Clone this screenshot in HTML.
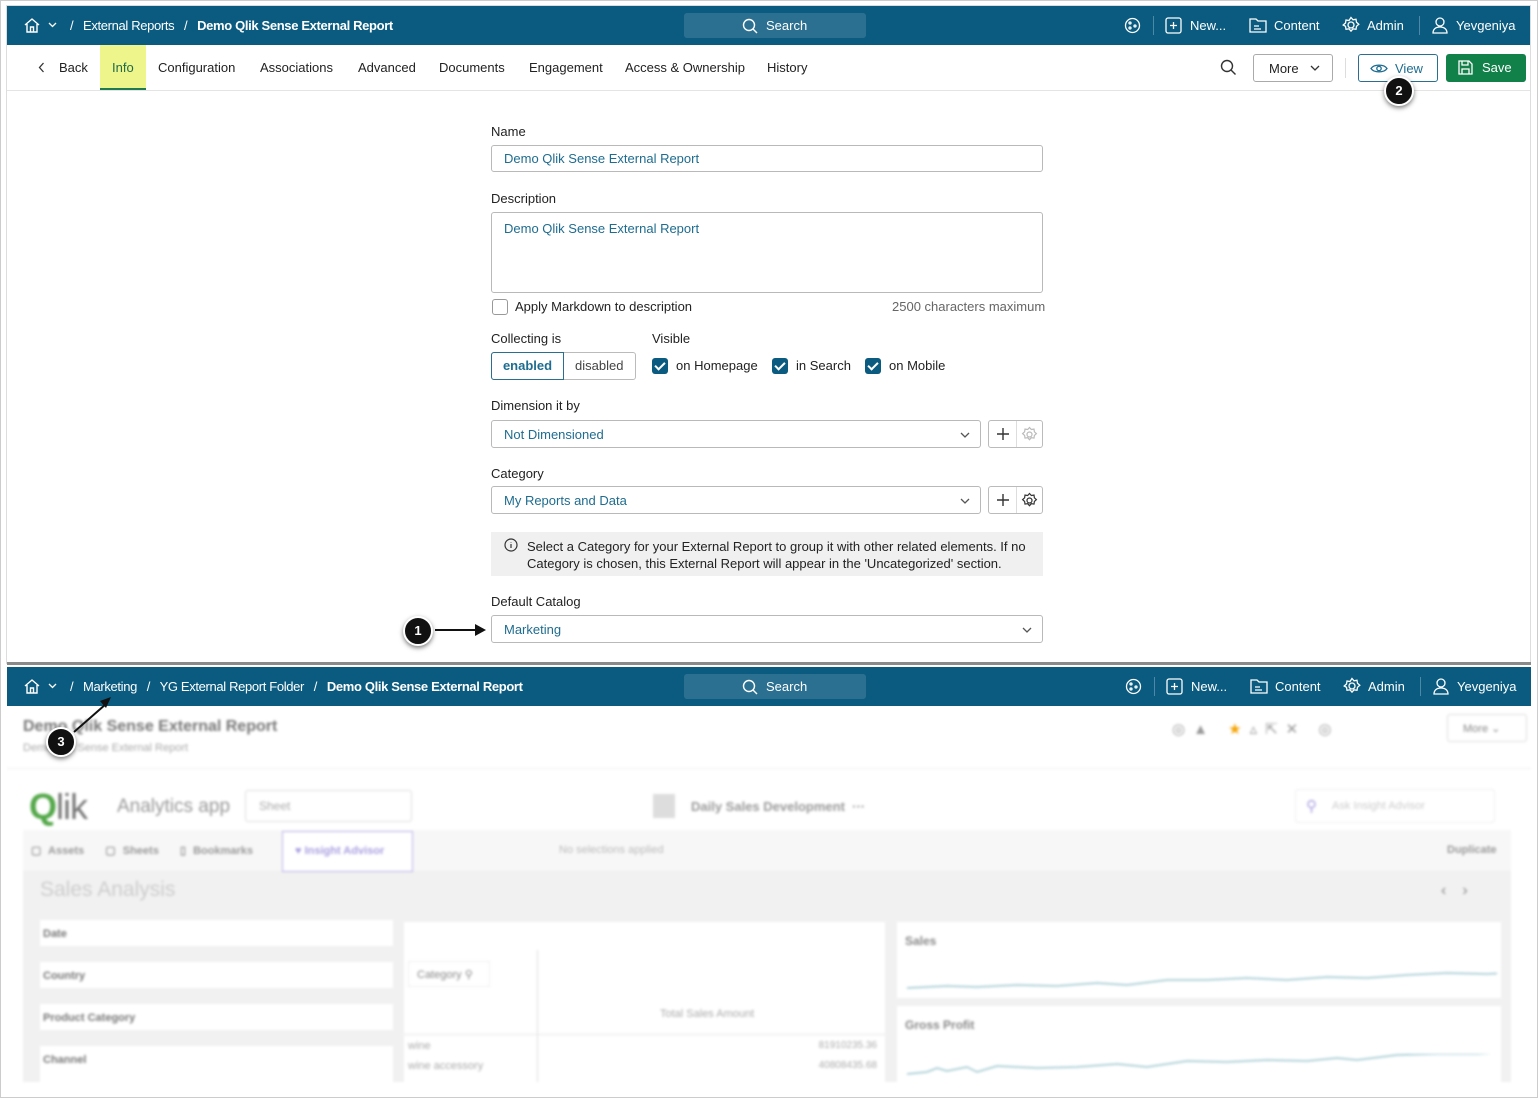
<!DOCTYPE html>
<html><head><meta charset="utf-8">
<style>
*{box-sizing:border-box;margin:0;padding:0}
body{width:1538px;height:1098px;background:#fff;font-family:"Liberation Sans",Arial,sans-serif;position:relative;overflow:hidden;color:#222}
.a{position:absolute}
.bar{position:absolute;left:7px;width:1523px;height:39px;background:#0a5b7f;color:#fff;font-size:13px}
.bar .t{position:absolute;top:12px;white-space:nowrap}
.bc{letter-spacing:-0.35px}
.srch{position:absolute;left:677px;top:7px;width:182px;height:25px;background:#2b7091;border-radius:3px}
.lbl{position:absolute;font-size:13px;color:#222}
.inp{position:absolute;border:1px solid #b9b9b9;border-radius:3px;background:#fff;font-size:13px;color:#1e6c8f;padding-left:12px}
.cb{position:absolute;width:16px;height:16px;border-radius:3px;background:#0a5b7f}
.cb:after{content:"";position:absolute;left:5px;top:2px;width:4px;height:8px;border:solid #fff;border-width:0 2px 2px 0;transform:rotate(45deg)}
.num{position:absolute;width:30px;height:30px;border-radius:50%;background:#111;border:2px solid #fff;box-shadow:0 2px 5px rgba(0,0,0,.5);color:#fff;font-weight:bold;font-size:13px;text-align:center;line-height:26px}
.tab{position:absolute;top:60px;font-size:13px;color:#222}
.blur{filter:blur(1.3px)}
</style></head><body>
<div class="a" style="left:0;top:0;width:1538px;height:1098px;border:1px solid #ccc"></div>
<div class="a" style="left:6px;top:5px;width:1525px;height:659px;border:1px solid #ddd"></div>

<div class="bar" style="top:6px">
 <svg class="a" style="left:16px;top:11px" width="18" height="17" viewBox="0 0 18 17" fill="none" stroke="#fff" stroke-width="1.4"><path d="M2 8L9 2l7 6M4 7v8h10V7M7.5 15v-5h3v5"/></svg>
 <svg class="a" style="left:41px;top:16px" width="9" height="6" viewBox="0 0 9 6" fill="none" stroke="#fff" stroke-width="1.3"><path d="M1 1l3.5 3.5L8 1"/></svg>
 <span class="t bc" style="left:63px">/ &nbsp; External Reports &nbsp; / &nbsp; <b>Demo Qlik Sense External Report</b></span>
 <div class="srch"><svg class="a" style="left:58px;top:5px" width="16" height="16" fill="none" stroke="#fff" stroke-width="1.4"><circle cx="7" cy="7" r="5.5"/><path d="M11 11l4 4"/></svg><span class="t" style="left:82px;top:5px">Search</span></div>
 <svg class="a" style="left:1117px;top:11px" width="17" height="17" fill="none" stroke="#fff" stroke-width="1.3"><circle cx="8.5" cy="8.5" r="7"/><circle cx="6" cy="6" r="1"/><circle cx="11" cy="9" r="1"/><circle cx="6" cy="11" r="1"/></svg>
 <div class="a" style="left:1146px;top:10px;width:1px;height:19px;background:#4d88a6"></div>
 <svg class="a" style="left:1158px;top:11px" width="17" height="17" fill="none" stroke="#fff" stroke-width="1.3"><rect x="1" y="1" width="15" height="15" rx="2"/><path d="M8.5 5v7M5 8.5h7"/></svg>
 <span class="t" style="left:1183px">New...</span>
 <svg class="a" style="left:1242px;top:11px" width="18" height="16" fill="none" stroke="#fff" stroke-width="1.3"><path d="M1 2h6l2 2h8v11H1z M5 9h5M5 12h7"/></svg>
 <span class="t" style="left:1267px">Content</span>
 <svg class="a" style="left:1335px;top:10px" width="18" height="18" fill="none" stroke="#fff" stroke-width="1.3"><circle cx="9" cy="9" r="3"/><path d="M9 1.5l2 2.3 3-.5.5 3 2.3 2-2.3 2-.5 3-3-.5-2 2.3-2-2.3-3 .5-.5-3L1.2 9l2.3-2 .5-3 3 .5z"/></svg>
 <span class="t" style="left:1360px">Admin</span>
 <div class="a" style="left:1412px;top:10px;width:1px;height:19px;background:#4d88a6"></div>
 <svg class="a" style="left:1425px;top:10px" width="16" height="18" fill="none" stroke="#fff" stroke-width="1.3"><circle cx="8" cy="6" r="4"/><path d="M1 17c0-4 3-6 7-6s7 2 7 6z"/></svg>
 <span class="t" style="left:1449px">Yevgeniya</span>
</div>

<div class="a" style="left:100px;top:45px;width:46px;height:45px;background:#eef58a;border-bottom:2px solid #1f7a50"></div>
<div class="a" style="left:7px;top:90px;width:1523px;height:1px;background:#e4e4e4"></div>
<svg class="a" style="left:38px;top:62px" width="7" height="11" fill="none" stroke="#333" stroke-width="1.3"><path d="M5.5 1L1.5 5.5 5.5 10"/></svg>
<span class="tab" style="left:59px">Back</span>
<span class="tab" style="left:112px;color:#1f6a4a">Info</span>
<span class="tab" style="left:158px">Configuration</span>
<span class="tab" style="left:260px">Associations</span>
<span class="tab" style="left:358px">Advanced</span>
<span class="tab" style="left:439px">Documents</span>
<span class="tab" style="left:529px">Engagement</span>
<span class="tab" style="left:625px">Access &amp; Ownership</span>
<span class="tab" style="left:767px">History</span>
<svg class="a" style="left:1220px;top:59px" width="17" height="17" fill="none" stroke="#333" stroke-width="1.4"><circle cx="7" cy="7" r="5.5"/><path d="M11 11l4.5 4.5"/></svg>
<div class="a" style="left:1253px;top:54px;width:80px;height:28px;border:1px solid #aaa;border-radius:3px;font-size:13px;padding:6px 0 0 15px">More <svg style="position:absolute;left:56px;top:10px" width="10" height="6" fill="none" stroke="#333" stroke-width="1.3"><path d="M1 1l4 4 4-4"/></svg></div>
<div class="a" style="left:1345px;top:58px;width:1px;height:20px;background:#ddd"></div>
<div class="a" style="left:1358px;top:54px;width:80px;height:28px;border:1px solid #2a6f8e;border-radius:3px;font-size:13px;color:#1e6c8f;padding:6px 0 0 36px">View<svg style="position:absolute;left:11px;top:8px" width="18" height="11" fill="none" stroke="#1e6c8f" stroke-width="1.3"><path d="M1 5.5C4 1 14 1 17 5.5 14 10 4 10 1 5.5z"/><circle cx="9" cy="5.5" r="2.2"/></svg></div>
<div class="a" style="left:1446px;top:54px;width:80px;height:28px;background:#128049;border-radius:3px;font-size:13px;color:#fff;padding:6px 0 0 36px">Save<svg style="position:absolute;left:12px;top:6px" width="15" height="15" fill="none" stroke="#fff" stroke-width="1.3"><path d="M1 1h10l3 3v10H1z M4 1v4h6V1 M4 14V9h7v5"/></svg></div>
<div class="num" style="left:1384px;top:76px">2</div>

<div class="lbl" style="left:491px;top:124px">Name</div>
<div class="inp" style="left:491px;top:145px;width:552px;height:27px;line-height:26px">Demo Qlik Sense External Report</div>
<div class="lbl" style="left:491px;top:191px">Description</div>
<div class="inp" style="left:491px;top:212px;width:552px;height:81px;padding-top:8px">Demo Qlik Sense External Report</div>
<div class="a" style="left:492px;top:299px;width:16px;height:16px;border:1px solid #999;border-radius:3px"></div>
<div class="lbl" style="left:515px;top:299px">Apply Markdown to description</div>
<div class="lbl" style="left:892px;top:299px;color:#666">2500 characters maximum</div>
<div class="lbl" style="left:491px;top:331px">Collecting is</div>
<div class="lbl" style="left:652px;top:331px">Visible</div>
<div class="a" style="left:491px;top:352px;width:145px;height:28px;border:1px solid #bbb;border-radius:3px"></div>
<div class="a" style="left:491px;top:352px;width:73px;height:28px;border:1px solid #2a6f8e;border-radius:3px 0 0 3px;font-size:13px;color:#1e6c8f;font-weight:bold;text-align:center;line-height:26px">enabled</div>
<div class="lbl" style="left:575px;top:358px;color:#444">disabled</div>
<div class="cb" style="left:652px;top:358px"></div><div class="lbl" style="left:676px;top:358px">on Homepage</div>
<div class="cb" style="left:772px;top:358px"></div><div class="lbl" style="left:796px;top:358px">in Search</div>
<div class="cb" style="left:865px;top:358px"></div><div class="lbl" style="left:889px;top:358px">on Mobile</div>

<div class="lbl" style="left:491px;top:398px">Dimension it by</div>
<div class="inp" style="left:491px;top:420px;width:490px;height:28px;line-height:27px">Not Dimensioned<svg style="position:absolute;right:10px;top:11px" width="10" height="6" fill="none" stroke="#555" stroke-width="1.3"><path d="M1 1l4 4 4-4"/></svg></div>
<div class="a" style="left:988px;top:420px;width:55px;height:28px;border:1px solid #bbb;border-radius:3px"><div class="a" style="left:27px;top:0;width:1px;height:26px;background:#ddd"></div>
<svg class="a" style="left:7px;top:6px" width="14" height="14" stroke="#333" stroke-width="1.4"><path d="M7 1v12M1 7h12"/></svg>
<svg class="a" style="left:32px;top:5px" width="17" height="17" fill="none" stroke="#bbb" stroke-width="1.2"><circle cx="8.5" cy="8.5" r="2.5"/><path d="M8.5 1.5l1.8 2 2.7-.4.4 2.7 2 1.8-2 1.8-.4 2.7-2.7-.4-1.8 2-1.8-2-2.7.4-.4-2.7-2-1.8 2-1.8.4-2.7 2.7.4z"/></svg></div>

<div class="lbl" style="left:491px;top:466px">Category</div>
<div class="inp" style="left:491px;top:486px;width:490px;height:28px;line-height:27px">My Reports and Data<svg style="position:absolute;right:10px;top:11px" width="10" height="6" fill="none" stroke="#555" stroke-width="1.3"><path d="M1 1l4 4 4-4"/></svg></div>
<div class="a" style="left:988px;top:486px;width:55px;height:28px;border:1px solid #bbb;border-radius:3px"><div class="a" style="left:27px;top:0;width:1px;height:26px;background:#ddd"></div>
<svg class="a" style="left:7px;top:6px" width="14" height="14" stroke="#333" stroke-width="1.4"><path d="M7 1v12M1 7h12"/></svg>
<svg class="a" style="left:32px;top:5px" width="17" height="17" fill="none" stroke="#333" stroke-width="1.2"><circle cx="8.5" cy="8.5" r="2.5"/><path d="M8.5 1.5l1.8 2 2.7-.4.4 2.7 2 1.8-2 1.8-.4 2.7-2.7-.4-1.8 2-1.8-2-2.7.4-.4-2.7-2-1.8 2-1.8.4-2.7 2.7.4z"/></svg></div>

<div class="a" style="left:491px;top:532px;width:552px;height:44px;background:#f0f0f0"></div>
<svg class="a" style="left:504px;top:538px" width="14" height="14" fill="none" stroke="#333" stroke-width="1.2"><circle cx="7" cy="7" r="6"/><path d="M7 6v4M7 4v.5"/></svg>
<div class="lbl" style="left:527px;top:538px;line-height:17px;width:500px">Select a Category for your External Report to group it with other related elements. If no Category is chosen, this External Report will appear in the 'Uncategorized' section.</div>

<div class="lbl" style="left:491px;top:594px">Default Catalog</div>
<div class="inp" style="left:491px;top:615px;width:552px;height:28px;line-height:27px">Marketing<svg style="position:absolute;right:10px;top:11px" width="10" height="6" fill="none" stroke="#555" stroke-width="1.3"><path d="M1 1l4 4 4-4"/></svg></div>
<div class="num" style="left:403px;top:616px">1</div>
<svg class="a" style="left:435px;top:623px" width="52" height="14"><path d="M0 7h42" stroke="#111" stroke-width="2"/><path d="M40 1l11 6-11 6z" fill="#111"/></svg>

<div class="a" style="left:7px;top:662px;width:1524px;height:3px;background:#8a8a8a"></div>

<div class="bar" style="top:667px;width:1524px">
 <svg class="a" style="left:16px;top:11px" width="18" height="17" viewBox="0 0 18 17" fill="none" stroke="#fff" stroke-width="1.4"><path d="M2 8L9 2l7 6M4 7v8h10V7M7.5 15v-5h3v5"/></svg>
 <svg class="a" style="left:41px;top:16px" width="9" height="6" viewBox="0 0 9 6" fill="none" stroke="#fff" stroke-width="1.3"><path d="M1 1l3.5 3.5L8 1"/></svg>
 <span class="t bc" style="left:63px">/ &nbsp; Marketing &nbsp; / &nbsp; YG External Report Folder &nbsp; / &nbsp; <b>Demo Qlik Sense External Report</b></span>
 <div class="srch"><svg class="a" style="left:58px;top:5px" width="16" height="16" fill="none" stroke="#fff" stroke-width="1.4"><circle cx="7" cy="7" r="5.5"/><path d="M11 11l4 4"/></svg><span class="t" style="left:82px;top:5px">Search</span></div>
 <svg class="a" style="left:1118px;top:11px" width="17" height="17" fill="none" stroke="#fff" stroke-width="1.3"><circle cx="8.5" cy="8.5" r="7"/><circle cx="6" cy="6" r="1"/><circle cx="11" cy="9" r="1"/><circle cx="6" cy="11" r="1"/></svg>
 <div class="a" style="left:1147px;top:10px;width:1px;height:19px;background:#4d88a6"></div>
 <svg class="a" style="left:1159px;top:11px" width="17" height="17" fill="none" stroke="#fff" stroke-width="1.3"><rect x="1" y="1" width="15" height="15" rx="2"/><path d="M8.5 5v7M5 8.5h7"/></svg>
 <span class="t" style="left:1184px">New...</span>
 <svg class="a" style="left:1243px;top:11px" width="18" height="16" fill="none" stroke="#fff" stroke-width="1.3"><path d="M1 2h6l2 2h8v11H1z M5 9h5M5 12h7"/></svg>
 <span class="t" style="left:1268px">Content</span>
 <svg class="a" style="left:1336px;top:10px" width="18" height="18" fill="none" stroke="#fff" stroke-width="1.3"><circle cx="9" cy="9" r="3"/><path d="M9 1.5l2 2.3 3-.5.5 3 2.3 2-2.3 2-.5 3-3-.5-2 2.3-2-2.3-3 .5-.5-3L1.2 9l2.3-2 .5-3 3 .5z"/></svg>
 <span class="t" style="left:1361px">Admin</span>
 <div class="a" style="left:1413px;top:10px;width:1px;height:19px;background:#4d88a6"></div>
 <svg class="a" style="left:1426px;top:10px" width="16" height="18" fill="none" stroke="#fff" stroke-width="1.3"><circle cx="8" cy="6" r="4"/><path d="M1 17c0-4 3-6 7-6s7 2 7 6z"/></svg>
 <span class="t" style="left:1450px">Yevgeniya</span>
</div>

<div class="a blur" style="left:7px;top:706px;width:1524px;height:378px">
 <div class="a" style="left:16px;top:12px;font-size:16px;font-weight:bold;color:#777">Demo Qlik Sense External Report</div>
 <div class="a" style="left:16px;top:36px;font-size:11px;color:#aaa">Demo Qlik Sense External Report</div>
 <div class="a" style="left:1165px;top:14px;font-size:15px;color:#999;letter-spacing:8px">◎▲ <span style="color:#f5a300">★</span>▵⇱✕ ◎</div>
 <div class="a" style="left:1440px;top:8px;width:80px;height:28px;border:1px solid #ddd;border-radius:3px;font-size:11px;color:#888;padding:7px 15px">More ⌄</div>
 <div class="a" style="left:0;top:62px;width:1524px;height:1px;background:#eee"></div>
 <div class="a" style="left:22px;top:80px;font-size:36px;color:#54a84a;font-weight:bold;letter-spacing:-1px">Q<span style="color:#777;font-weight:normal">lik</span></div>
 <div class="a" style="left:110px;top:90px;font-size:19px;color:#999">Analytics app</div>
 <div class="a" style="left:238px;top:84px;width:167px;height:32px;border:1px solid #ddd;border-radius:3px;font-size:12px;color:#aaa;padding:8px 13px">Sheet</div>
 <div class="a" style="left:646px;top:88px;width:22px;height:24px;background:#ddd"></div>
 <div class="a" style="left:684px;top:93px;font-size:13px;font-weight:bold;color:#999">Daily Sales Development &nbsp;···</div>
 <div class="a" style="left:1288px;top:83px;width:200px;height:34px;border:1px solid #eee;border-radius:3px;font-size:11px;color:#ccc;padding:10px 36px"><span style="position:absolute;left:10px;top:7px;color:#a99fe0;font-size:15px">⚲</span>Ask Insight Advisor</div>
 <div class="a" style="left:16px;top:124px;width:1488px;height:42px;background:#f7f7f7;border-bottom:1px solid #eee"></div>
 <div class="a" style="left:24px;top:138px;font-size:11px;font-weight:bold;color:#999;word-spacing:4px">▢ Assets &nbsp; ▢ Sheets &nbsp; ▯ Bookmarks</div>
 <div class="a" style="left:275px;top:125px;width:131px;height:41px;border:1px solid #b8b1e8;background:#fff;font-size:11px;font-weight:bold;color:#a99fe0;padding:13px 12px">♥ Insight Advisor</div>
 <div class="a" style="left:552px;top:138px;font-size:11px;color:#bbb">No selections applied</div>
 <div class="a" style="left:1440px;top:138px;font-size:11px;font-weight:bold;color:#999">Duplicate</div>
 <div class="a" style="left:16px;top:166px;width:1488px;height:210px;background:#f1f1f1"></div>
 <div class="a" style="left:33px;top:172px;font-size:21px;color:#ccc">Sales Analysis</div>
 <div class="a" style="left:1434px;top:176px;font-size:16px;color:#888;letter-spacing:16px">‹›</div>
 <div class="a" style="left:33px;top:214px;width:353px;height:26px;background:#fff;font-size:11px;font-weight:bold;color:#777;padding:8px 3px">Date</div>
 <div class="a" style="left:33px;top:256px;width:353px;height:26px;background:#fff;font-size:11px;font-weight:bold;color:#777;padding:8px 3px">Country</div>
 <div class="a" style="left:33px;top:298px;width:353px;height:26px;background:#fff;font-size:11px;font-weight:bold;color:#777;padding:8px 3px">Product Category</div>
 <div class="a" style="left:33px;top:340px;width:353px;height:36px;background:#fff;font-size:11px;font-weight:bold;color:#777;padding:8px 3px">Channel</div>
 <div class="a" style="left:397px;top:216px;width:481px;height:160px;background:#fff">
  <div class="a" style="left:133px;top:28px;width:1px;height:132px;background:#ddd"></div>
  <div class="a" style="left:4px;top:39px;width:82px;height:26px;border:1px solid #eee;font-size:11px;color:#888;padding:6px 8px">Category ⚲</div>
  <div class="a" style="left:256px;top:86px;font-size:11px;color:#aaa">Total Sales Amount</div>
  <div class="a" style="left:0;top:112px;width:481px;height:1px;background:#e6e6e6"></div>
  <div class="a" style="left:4px;top:118px;font-size:11px;color:#aaa">wine</div>
  <div class="a" style="left:4px;top:138px;font-size:11px;color:#aaa">wine accessory</div>
  <div class="a" style="right:8px;top:118px;font-size:10px;color:#aaa">81910235.36</div>
  <div class="a" style="right:8px;top:138px;font-size:10px;color:#aaa">40808435.68</div>
 </div>
 <div class="a" style="left:890px;top:216px;width:604px;height:76px;background:#fff"><div class="a" style="left:8px;top:12px;font-size:12px;font-weight:bold;color:#888">Sales</div>
 <svg class="a" style="left:10px;top:50px" width="590" height="20" fill="none" stroke="#9cc6cf" stroke-width="1.5"><path d="M0 16l40-2 30 1 40-2 40 1 40-3 30 2 40-5 40 0 40-2 40 2 40-3 40 1 40-3 40-2 40 1 40-2 40-1 30-2"/></svg></div>
 <div class="a" style="left:890px;top:300px;width:604px;height:76px;background:#fff"><div class="a" style="left:8px;top:12px;font-size:12px;font-weight:bold;color:#888">Gross Profit</div>
 <svg class="a" style="left:10px;top:48px" width="590" height="24" fill="none" stroke="#9cc6cf" stroke-width="1.5"><path d="M0 20l20-2 10-4 10 3 20-4 10 5 20-6 40 2 40-1 40-3 30 3 40-6 40 1 40-2 40 1 30-3 20 2 40-5 40-1 40 0 40-2 30-2 10 3 10-2"/></svg></div>
</div>

<svg class="a" style="left:70px;top:696px" width="45" height="40"><path d="M4 36L36 8" stroke="#111" stroke-width="2"/><path d="M30 5l11-4-5 11z" fill="#111"/></svg>
<div class="num" style="left:46px;top:727px">3</div>
</body></html>
